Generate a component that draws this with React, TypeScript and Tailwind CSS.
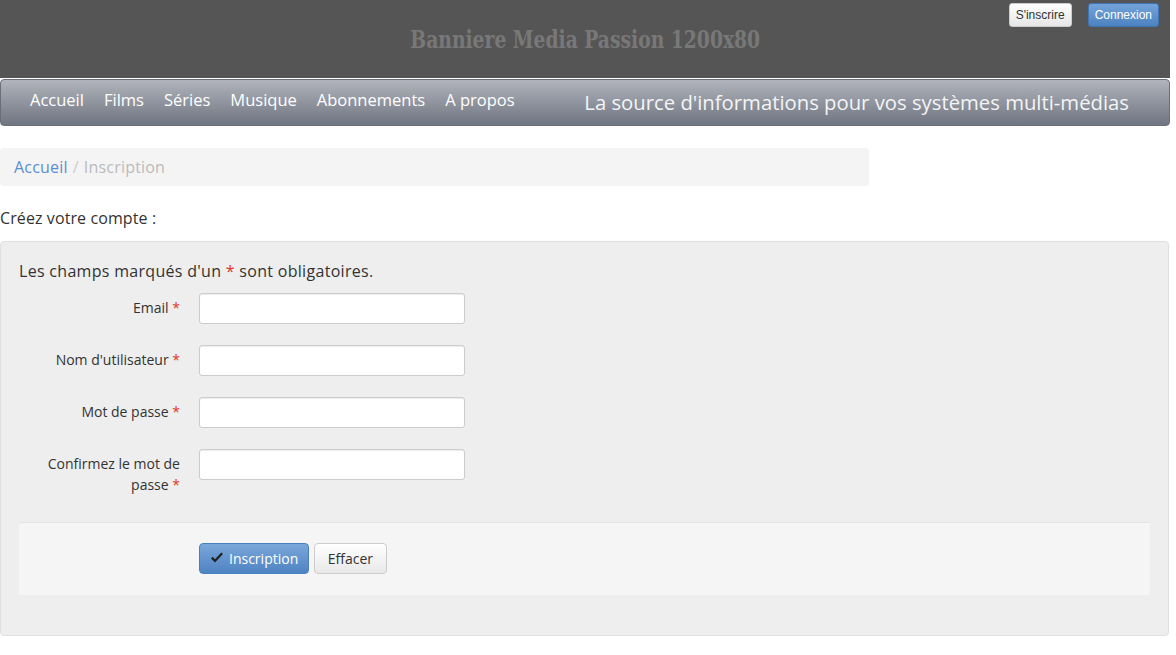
import React from "react";

const body = { fontFamily: "'Open Sans', Lato, sans-serif" };

function Field({ label, second }: { label: string; second?: string }) {
  return (
    <div className="flex items-start">
      <label className="w-[161px] pt-[4px] text-right text-[14px] leading-[21px] text-[#333]">
        {second ? (
          <>
            {label}
            <br />
            {second} <span className="text-[#e0352b]">*</span>
          </>
        ) : (
          <>
            {label} <span className="text-[#e0352b]">*</span>
          </>
        )}
      </label>
      <input
        type="text"
        className="ml-[19px] h-[31px] w-[266px] rounded-[3px] border border-[#ccc] bg-white shadow-[inset_0_1px_1px_rgba(0,0,0,0.075)]"
      />
    </div>
  );
}

export default function App() {
  return (
    <div className="min-h-[655px] w-[1176px] bg-white text-[#333]" style={body}>
      <div className="w-[1170px]">
        {/* Banner */}
        <div className="relative flex h-[78px] items-center justify-center bg-[#555555]">
          <span
            className="mt-[2px] inline-block text-[24px] font-bold text-[#787878] [transform:scaleX(0.78)]"
            style={{ fontFamily: "'DejaVu Serif', serif" }}
          >
            Banniere Media Passion 1200x80
          </span>
          <div className="absolute right-[11px] top-[3px] flex gap-[16px] text-[12px]" style={{ fontFamily: "'Liberation Sans', sans-serif" }}>
            <button className="h-[24px] rounded-[3px] border border-[#ccc] bg-gradient-to-b from-white to-[#e6e6e6] px-[6px] text-[#333]">
              S'inscrire
            </button>
            <button className="h-[24px] rounded-[3px] border border-[#3f74b5] bg-gradient-to-b from-[#74a3da] to-[#4d82c1] px-[6px] text-white">
              Connexion
            </button>
          </div>
        </div>
        {/* Navbar */}
        <div className="mt-[1px] flex h-[47px] items-center rounded-[4px] border border-[#6a6e78] bg-gradient-to-b from-[#b1b4bc] to-[#6f7581] pb-[5px] pl-[29px] pr-[40px] text-white">
          <nav className="flex gap-[20px] text-[16.5px]">
            <span>Accueil</span>
            <span>Films</span>
            <span>Séries</span>
            <span>Musique</span>
            <span>Abonnements</span>
            <span>A propos</span>
          </nav>
          <span className="ml-auto mt-[5px] text-[20.3px] text-[#f4f4f4]">
            La source d'informations pour vos systèmes multi-médias
          </span>
        </div>

        {/* Breadcrumb */}
        <div className="mt-[22px] flex h-[38px] w-[869px] items-center rounded-[4px] bg-[#f4f4f4] px-[14px] text-[16px] tracking-[0.2px]">
          <span className="text-[#5b8fd1]">Accueil</span>
          <span className="px-[5px] text-[#ccc]">/</span>
          <span className="text-[#bbb]">Inscription</span>
        </div>

        <p className="mt-[20px] text-[16px] tracking-[0.1px] text-[#333]">Créez votre compte :</p>

        {/* Well */}
        <div className="mt-[11px] w-[1169px] rounded-[4px] border border-[#e0e0e0] bg-[#eeeeee] px-[18px] pb-[40px] pt-[18px]">
          <p className="text-[16px] leading-[22px] tracking-[0.3px] text-[#333]">
            Les champs marqués d'un <span className="text-[#e0352b]">*</span> sont obligatoires.
          </p>
          <div className="mt-[11px] flex flex-col gap-[21px]">
            <Field label="Email" />
            <Field label="Nom d'utilisateur" />
            <Field label="Mot de passe" />
            <Field label="Confirmez le mot de" second="passe" />
          </div>
          <div className="mt-[27px] flex h-[73px] items-center border-t border-[#e5e5e5] bg-[#f5f5f5] pb-[2px] pl-[180px] text-[14px]">
            <button className="flex h-[31px] items-center gap-[5px] rounded-[4px] border border-[#4a7fbf] bg-gradient-to-b from-[#7aa7db] to-[#4f83c2] px-[10px] text-white">
              <svg width="14" height="12" viewBox="0 0 14 12">
                <path d="M1 6.5 L5 10.5 L13 2 L11.3 0.5 L5 7.2 L2.7 4.8 Z" fill="#222" />
              </svg>
              Inscription
            </button>
            <button className="ml-[5px] h-[31px] rounded-[4px] border border-[#ccc] bg-gradient-to-b from-white to-[#e8e8e8] px-[12.5px] text-[#333]">
              Effacer
            </button>
          </div>
        </div>
      </div>
    </div>
  );
}
